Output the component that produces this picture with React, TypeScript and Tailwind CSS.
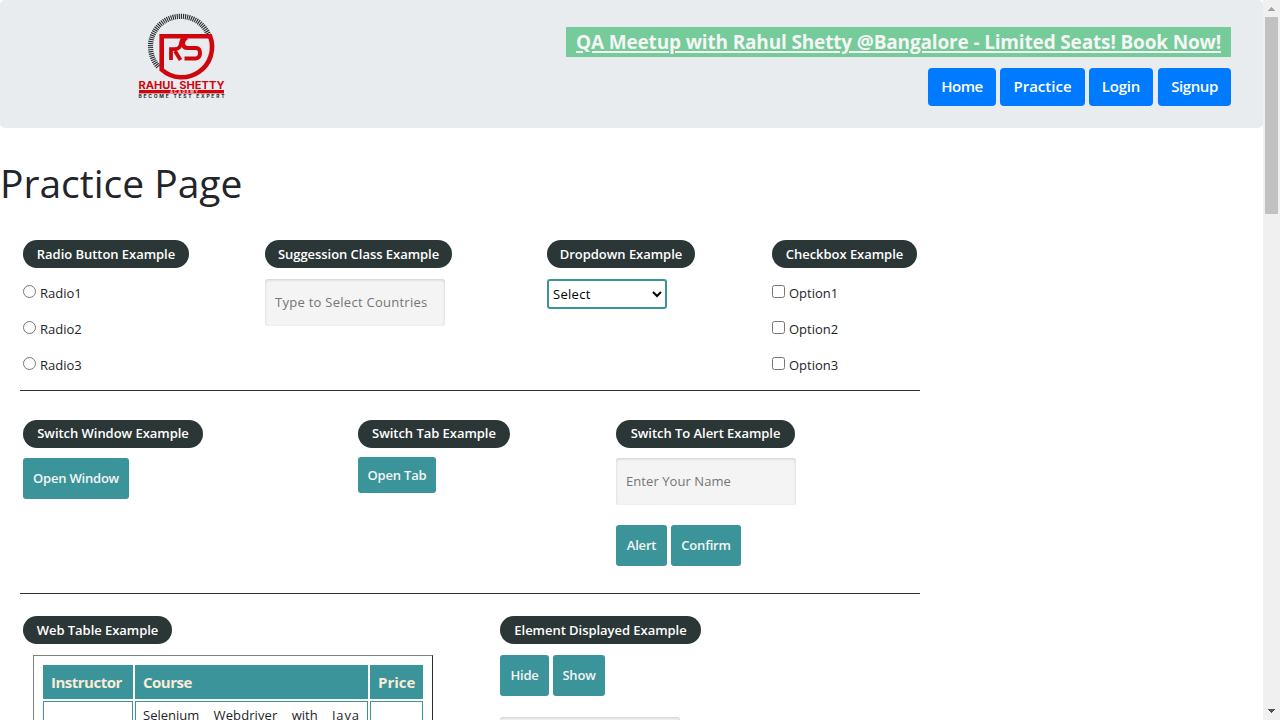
import React from "react";

function Logo() {
  return (
    <svg width="90" height="90" viewBox="136 12 90 90" className="block">
      <path d="M158.3 66.8 A30.2 30.2 0 1 1 209 36" fill="none" stroke="#26292c" strokeWidth="5.2" strokeDasharray="1.1 0.95" />
      <path d="M161.7 69.6 V36.2 H210 A30.2 30.2 0 0 1 161.7 69.6 Z" fill="none" stroke="#d0060f" strokeWidth="4.6" />
      <path d="M171 60 V49.2 H174.5 Q180 49 180.8 44 Q181.3 40.5 184 37 M175 51 L180.5 60" fill="none" stroke="#d0060f" strokeWidth="3.8" />
      <path d="M187 37.5 Q183 39.5 183 43.5 Q183.3 48 187.5 48 H196 Q200 48.3 200 53 Q200 58.2 195.5 58.4 H184.5" fill="none" stroke="#d0060f" strokeWidth="4" />
      <text x="138.5" y="88.6" textLength="86" lengthAdjust="spacingAndGlyphs" fontFamily="Inter, sans-serif" fontWeight="700" fontSize="10.6" fill="#d0060f">RAHUL SHETTY</text>
      <rect x="139" y="90" width="85" height="3.4" fill="#d0060f" />
      <text x="170" y="93.2" textLength="28" fontFamily="Inter, sans-serif" fontWeight="700" fontSize="3.8" fill="#f3dcdf">ACADEMY</text>
      <text x="138.5" y="98.1" textLength="86" fontFamily="Inter, sans-serif" fontWeight="700" fontSize="5" fill="#26292c">BECOME TEST EXPERT</text>
    </svg>
  );
}

function Pill({ className, children }: { className: string; children: React.ReactNode }) {
  return (
    <div className={`flex h-7 items-center justify-center rounded-full bg-[#2b3636] text-[13px] font-semibold tracking-[-0.04px] whitespace-nowrap text-white ${className}`}>
      {children}
    </div>
  );
}

function TealButton({ className, children }: { className: string; children: React.ReactNode }) {
  return (
    <button className={`shrink-0 rounded-[3px] bg-[#3a9499] text-center text-[13px] font-semibold tracking-[-0.2px] whitespace-nowrap text-[#f5f5f5] ${className}`}>
      {children}
    </button>
  );
}

function NavButton({ className, children }: { className: string; children: React.ReactNode }) {
  return (
    <button className={`h-[38px] rounded bg-[#007bff] pb-0.5 text-center text-[15px] font-semibold whitespace-nowrap text-white ${className}`}>
      {children}
    </button>
  );
}

const inputClass =
  "block h-[47px] w-[180px] rounded-[3px] bg-[#f4f4f4] px-2.5 pb-0.5 text-[13px] shadow-[inset_0_1px_3px_rgba(0,0,0,0.16)] placeholder:text-[#757575] placeholder:opacity-100";

function Choices({ type, labels }: { type: string; labels: string[] }) {
  return (
    <div className="mt-[7px]">
      {labels.map((label) => (
        <label key={label} className="flex h-9 items-center text-[13px] leading-9">
          <input type={type} className="mr-1 mb-[3px] size-[13px]" />
          {label}
        </label>
      ))}
    </div>
  );
}

export default function App() {
  return (
    <div className="flex h-[720px] w-[1280px] overflow-hidden bg-white font-['Open_Sans','Noto_Sans',sans-serif] text-[#212529]">
      <div className="w-[1263px] shrink-0 overflow-hidden">
        <header className="flex h-32 justify-between rounded-[5px] bg-[#e8ecef] pr-8 pl-[136px]">
          <div className="pt-3">
            <Logo />
          </div>
          <div className="flex flex-col items-end pt-[27px]">
            <a className="flex h-[30px] w-[665px] items-center justify-center bg-[#75cb99] text-[19px] font-bold tracking-[-0.155px] whitespace-nowrap text-[#f5f5f5] underline decoration-2 underline-offset-2">
              QA Meetup with Rahul Shetty @Bangalore - Limited Seats! Book Now!
            </a>
            <nav className="mt-[11px] flex">
              <NavButton className="mr-1 w-[68px] tracking-[-0.5px]">Home</NavButton>
              <NavButton className="mr-1 w-[85px]">Practice</NavButton>
              <NavButton className="mr-[5px] w-16 tracking-[-0.2px]">Login</NavButton>
              <NavButton className="w-[73px] tracking-[-0.4px]">Signup</NavButton>
            </nav>
          </div>
        </header>

        <h1 className="mt-[31px] h-12 text-[39px] leading-12 whitespace-nowrap">Practice Page</h1>

        <main className="ml-5 w-[900px]">
          <section className="mt-[33px] flex h-[151px] border-b border-[#2b3636] pl-[3px]">
            <div className="w-[242px]">
              <Pill className="w-[166px] pt-px">Radio Button Example</Pill>
              <Choices type="radio" labels={["Radio1", "Radio2", "Radio3"]} />
            </div>
            <div className="w-[282px]">
              <Pill className="w-[187px] pt-px">Suggession Class Example</Pill>
              <input placeholder="Type to Select Countries" className={`mt-[11px] tracking-[0.27px] ${inputClass}`} />
            </div>
            <div className="w-[225px]">
              <Pill className="w-[148px] pt-px">Dropdown Example</Pill>
              <select className="mt-[11px] block h-[30px] w-[120px] rounded-[3px] border-2 border-[#3a9499] bg-white text-[13px] tracking-[0.3px] text-black">
                <option>Select</option>
              </select>
            </div>
            <div>
              <Pill className="w-[145px] pt-px">Checkbox Example</Pill>
              <Choices type="checkbox" labels={["Option1", "Option2", "Option3"]} />
            </div>
          </section>

          <section className="flex h-[203px] border-b border-[#2b3636] pt-[29px] pl-[3px]">
            <div className="w-[335px]">
              <Pill className="w-[180px] pb-px">Switch Window Example</Pill>
              <TealButton className="mt-2.5 h-[41px] w-[106px]">Open Window</TealButton>
            </div>
            <div className="w-[258px]">
              <Pill className="w-[152px] pb-px">Switch Tab Example</Pill>
              <TealButton className="mt-[9px] h-9 w-[78px] pt-px">Open Tab</TealButton>
            </div>
            <div>
              <Pill className="w-[179px] pb-px">Switch To Alert Example</Pill>
              <input placeholder="Enter Your Name" className={`mt-2.5 tracking-[0.07px] ${inputClass}`} />
              <div className="mt-5 flex gap-1">
                <TealButton className="h-[41px] w-[51px]">Alert</TealButton>
                <TealButton className="h-[41px] w-[70px]">Confirm</TealButton>
              </div>
            </div>
          </section>

          <section className="flex pt-[22px] pl-[3px]">
            <div className="w-[477px]">
              <Pill className="w-[149px] pt-px">Web Table Example</Pill>
              <div className="mt-[11px] ml-2.5 grid w-[400px] grid-cols-[90px_233px_53px] gap-0.5 border border-t-[#808080] border-r-[#2b2b2b] border-b-[#2b2b2b] border-l-[#808080] p-[9px] text-[13px]">
                <div className="h-[34px] bg-[#3a9499] pl-2 text-[15px] leading-[34px] font-bold tracking-[-0.5px] text-[#faebd7]">Instructor</div>
                <div className="h-[34px] bg-[#3a9499] pl-2 text-[15px] leading-[34px] font-bold tracking-[-0.5px] text-[#faebd7]">Course</div>
                <div className="h-[34px] bg-[#3a9499] pl-2 text-[15px] leading-[34px] font-bold text-[#faebd7]">Price</div>
                <div className="h-14 border border-[#3a9499]" />
                <div className="flex h-14 justify-between border border-[#3a9499] px-[7px] pt-[3px] leading-[21px]">
                  <span>Selenium</span>
                  <span className="tracking-[0.1px]">Webdriver</span>
                  <span>with</span>
                  <span className="tracking-[0.9px]">Java</span>
                </div>
                <div className="h-14 border border-[#3a9499]" />
              </div>
            </div>
            <div>
              <Pill className="w-[201px] pt-px">Element Displayed Example</Pill>
              <div className="mt-[11px] flex gap-1">
                <TealButton className="h-[41px] w-[49px]">Hide</TealButton>
                <TealButton className="h-[41px] w-[52px]">Show</TealButton>
              </div>
              <input className={`mt-[21px] ${inputClass}`} />
            </div>
          </section>
        </main>
      </div>

      <aside className="flex w-[17px] shrink-0 flex-col items-center bg-[#f0f0f0]">
        <svg width="17" height="17" shapeRendering="crispEdges">
          <path d="M8 7h1v1h1v1h1v1h1v1H5v-1h1V9h1V8h1z" fill="#a3a3a3" />
        </svg>
        <div className="h-[197px] w-[13px] bg-[#c1c1c1]" />
        <svg width="17" height="17" className="mt-auto" shapeRendering="crispEdges">
          <path d="M5 6h7v1h-1v1h-1v1H9v1H8V9H7V8H6V7H5z" fill="#505050" />
        </svg>
      </aside>
    </div>
  );
}
